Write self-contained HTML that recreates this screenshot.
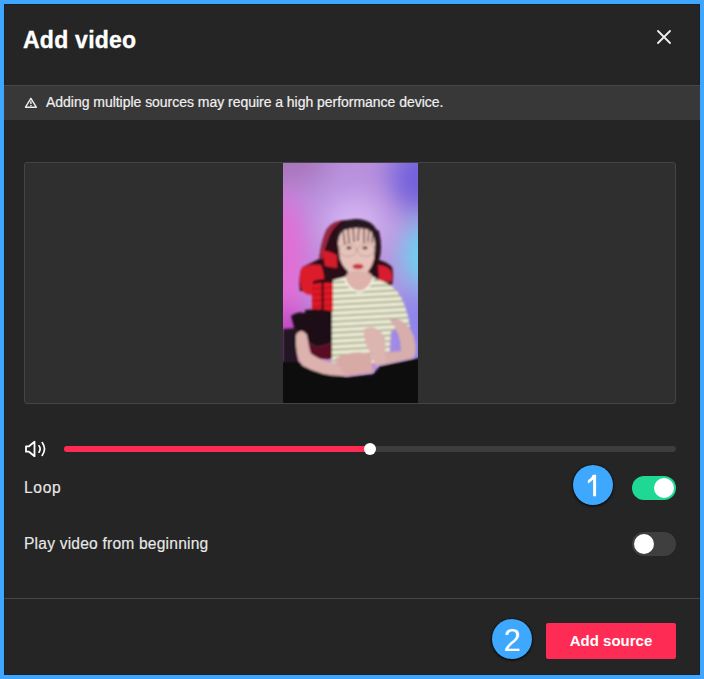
<!DOCTYPE html>
<html><head><meta charset="utf-8">
<style>
html,body{margin:0;padding:0;width:704px;height:679px;overflow:hidden;background:#3ea6ff;}
body{position:relative;font-family:"Liberation Sans",sans-serif;}
.dlg{position:absolute;left:4px;top:4px;width:696px;height:671px;background:#252525;box-shadow:inset 0 0 0 1px #15202a;}
.abs{position:absolute;}
.title{left:23px;top:28px;font-size:23px;font-weight:bold;color:#fff;line-height:25px;letter-spacing:0.25px;white-space:nowrap;-webkit-text-stroke:0.35px #fff;}
.warn{left:4px;top:85px;width:696px;height:35px;background:#383838;border-top:1px solid #474747;box-sizing:border-box;}
.wtext{left:46px;top:95px;font-size:14px;color:#f0f0f0;line-height:15px;letter-spacing:-0.03px;white-space:nowrap;-webkit-text-stroke:0.2px #f0f0f0;}
.vbox{left:24px;top:162px;width:652px;height:242px;background:#2f2f2f;border:1px solid #444;box-sizing:border-box;border-radius:3px;}
.video{left:283px;top:163px;width:135px;height:240px;overflow:hidden;}
.track{left:64px;top:446px;width:612px;height:6px;background:#3d3d3d;border-radius:3px;}
.fill{left:64px;top:446px;width:306px;height:6px;background:#fe2c55;border-radius:3px;}
.knob{left:364px;top:443px;width:12px;height:12px;background:#fff;border-radius:50%;}
.lbl{left:24px;font-size:15.6px;color:#e8e8e8;line-height:17px;letter-spacing:0.2px;white-space:nowrap;-webkit-text-stroke:0.15px #e8e8e8;}
.tog{left:632px;width:44px;height:24px;border-radius:12px;}
.tk{position:absolute;top:2px;width:20px;height:20px;border-radius:50%;background:#fff;}
.divider{left:4px;top:598px;width:696px;height:1px;background:#474747;}
.btn{left:546px;top:623px;width:130px;height:36px;background:#fe2c55;border-radius:2px;color:#fff;font-weight:bold;font-size:15px;line-height:36px;text-align:center;}
.badge{width:40px;height:40px;border-radius:50%;background:#3ea8ff;color:#fff;font-size:30px;line-height:40px;text-align:center;box-shadow:0 1px 3px rgba(0,0,0,0.85),0 0 1.5px rgba(0,0,0,0.9);}
</style></head><body>
<div class="dlg"></div>
<div class="abs title">Add video</div>
<svg class="abs" style="left:657px;top:30px" width="14" height="14" viewBox="0 0 14 14"><path d="M1 1L13 13M13 1L1 13" stroke="#eee" stroke-width="1.8" stroke-linecap="round"/></svg>
<div class="abs warn"></div>
<svg class="abs" style="left:24px;top:96px" width="14" height="13" viewBox="0 0 14 13"><path d="M6.9 2.3L1.5 11.2H12.3Z" fill="none" stroke="#eee" stroke-width="1.4" stroke-linejoin="round"/><path d="M6.9 5.2V8.1" stroke="#f2f2f2" stroke-width="1.4"/><rect x="6.2" y="8.9" width="1.4" height="1.3" fill="#f2f2f2"/></svg>
<div class="abs wtext">Adding multiple sources may require a high performance device.</div>
<div class="abs vbox"></div>
<div class="abs video" id="video"><svg width="135" height="240" viewBox="0 0 135 240" style="display:block">
<defs>
<filter id="bb" x="-50%" y="-50%" width="200%" height="200%"><feGaussianBlur stdDeviation="14"/></filter>
<filter id="bl" x="-10%" y="-10%" width="120%" height="120%"><feGaussianBlur stdDeviation="0.9"/></filter>
<pattern id="stripes" width="8" height="5.6" patternUnits="userSpaceOnUse" patternTransform="rotate(-3)"><rect width="8" height="5.6" fill="#ececd6"/><rect y="3.6" width="8" height="1.3" fill="#8c8c70"/></pattern>
</defs>
<rect width="135" height="240" fill="#b890dc"/>
<g filter="url(#bb)">
<ellipse cx="5" cy="-5" rx="40" ry="28" fill="#a874bc"/>
<ellipse cx="-5" cy="100" rx="30" ry="70" fill="#e46cd6"/>
<ellipse cx="5" cy="185" rx="30" ry="40" fill="#c040c4"/>
<ellipse cx="72" cy="62" rx="32" ry="30" fill="#d4b4f2"/>
<ellipse cx="135" cy="15" rx="28" ry="35" fill="#7060dc"/>
<ellipse cx="142" cy="92" rx="22" ry="32" fill="#60dcf4"/>
<ellipse cx="135" cy="165" rx="28" ry="40" fill="#8c84ec"/>
</g>
<g filter="url(#bl)">
<!-- chair back -->
<path d="M17 128 Q15 110 20 104 Q28 100 36 96 Q38 80 42 70 Q46 60 56 58 L74 56 L96 68 Q100 86 96 97 Q104 99 109 104 Q111 112 109 122 L60 130Z" fill="#2a0a18"/>
<path d="M36 96 Q38 80 42 70 Q46 61 55 58 L58 59 Q50 64 46 74 Q42 84 40 96Z" fill="#c03050" opacity="0.75"/>
<path d="M18 106 Q26 100 38 102 Q42 112 41 122 Q40 130 30 132 Q20 132 18 124 Q16 114 18 106Z" fill="#dc1a2c"/>
<path d="M39 87 Q47 88 54 92 L54 105 Q46 104 42 103Z" fill="#d41a2c"/>
<path d="M95 102 Q104 102 108 108 Q110 114 108 119 L96 118Z" fill="#d81a30"/>
<!-- hair -->
<path d="M52 80 Q52 58 74 56 Q94 57 96 76 L96 90 L88 96 L58 96Z" fill="#281820"/>
<!-- neck -->
<path d="M65 106 L85 106 L87 122 L63 122Z" fill="#cfa49c"/>
<!-- face -->
<path d="M55 80 Q56 64 74 62 Q90 63 92 80 L91 96 Q88 108 80 112 Q75 114 70 112 Q60 106 57 96Z" fill="#e6c2ba"/>
<path d="M54 70 Q58 58 74 57 Q91 58 95 72 L90 68 Q74 62 58 68Z" fill="#281820"/>
<path d="M60 67 L62 82 M65 65 L66 80 M70 63 L71 79 M76 62 L75 78 M81 63 L81 80 M86 65 L85 79 M90 68 L89 80" stroke="#4a3038" stroke-width="1.4" opacity="0.85"/>
<ellipse cx="65" cy="87" rx="8.5" ry="6.5" fill="none" stroke="#b89890" stroke-width="0.8"/>
<ellipse cx="83" cy="87" rx="8.5" ry="6.5" fill="none" stroke="#b89890" stroke-width="0.8"/>
<ellipse cx="66" cy="85" rx="2.6" ry="1.4" fill="#4a3030"/>
<ellipse cx="82" cy="85" rx="2.6" ry="1.4" fill="#4a3030"/>
<ellipse cx="75" cy="103.5" rx="5.5" ry="2.8" fill="#c83a42"/>
<!-- shirt -->
<path d="M48 118 Q58 114 67 114 Q76 124 88 114 Q104 118 114 128 Q124 142 127 164 L108 168 L106 200 L48 200 L46 170 L22 178 Q26 146 48 118Z" fill="url(#stripes)"/>
<path d="M62 114 Q64 108 76 108 Q88 108 90 114 Q86 127 76 128 Q66 127 62 114Z" fill="#dcb2aa"/><path d="M61 114 Q66 128 76 129 Q86 128 91 114" fill="none" stroke="#f2f2e0" stroke-width="1.8"/>
<!-- red chair arm -->
<path d="M29 120 Q38 117 50 118 L50 149 L29 150Z" fill="#e41828"/>
<rect x="38.5" y="118" width="2.2" height="31" fill="#3a0c14"/>
<path d="M29 126 L50 124 M29 132 L50 130 M29 138 L50 136 M29 144 L50 142" stroke="#8a0c18" stroke-width="1"/>
<path d="M30 118 Q40 115 50 116 L50 120 Q40 119 30 121Z" fill="#2a1018"/>
<path d="M8 153 Q14 148 22 150 L22 147 Q36 145 49 148 L49 180 L34 184 L24 178 L12 168Z" fill="#1c1018"/>
<path d="M0 166 L14 165 L15 199 L0 199Z" fill="#241420"/>
<path d="M24 178 L34 184 L49 180 L49 196 L30 196Z" fill="#5a1020"/>
<!-- desk -->
<path d="M-6 199 L20 199 L63 214 L90 211 L97 203 L141 194 L141 246 L-6 246Z" fill="#0f090f"/>
<!-- arms -->
<path d="M13 172 Q18 164 24 172 L27 190 Q40 200 66 203 L64 213 Q40 214 20 203 Q12 196 13 172Z" fill="#dcb2ae"/>
<path d="M106 156 Q124 154 131 174 Q135 190 130 195 L98 202 Q91 198 93 191 L118 188 Q118 170 106 156Z" fill="#d8aeac"/>
<path d="M81 166 Q94 160 102 175 L103 199 L93 203 L87 189 Q80 178 81 166Z" fill="#dcb4b0"/>
<path d="M52 196 Q68 186 88 191 L90 209 L62 213Z" fill="#d8aaa6"/>
</g>
</svg></div>
<svg class="abs" style="left:24px;top:440px" width="24" height="18" viewBox="0 0 24 18"><path d="M2 6.3H5L10.5 1.8V16.2L5 11.7H2Z" fill="none" stroke="#fff" stroke-width="1.8" stroke-linejoin="round"/><path d="M15 5.8Q17.3 9 15 12.2" fill="none" stroke="#fff" stroke-width="1.7" stroke-linecap="round"/><path d="M18.2 2.6Q22.8 9 18.2 15.4" fill="none" stroke="#fff" stroke-width="1.7" stroke-linecap="round"/></svg>
<div class="abs track"></div>
<div class="abs fill"></div>
<div class="abs knob"></div>
<div class="abs lbl" style="top:479px;letter-spacing:0.65px">Loop</div>
<div class="abs tog" style="top:476px;background:#1fd894"><div class="tk" style="left:22px"></div></div>
<div class="abs lbl" style="top:535px">Play video from beginning</div>
<div class="abs tog" style="top:532px;background:#3f3f3f"><div class="tk" style="left:2px"></div></div>
<div class="abs divider"></div>
<div class="abs btn">Add source</div>
<div class="abs badge" style="left:573px;top:465px"><svg width="40" height="40" viewBox="0 0 40 40" style="position:absolute;left:0;top:0"><path d="M19.9 9.7L23.1 9.7L23.1 31.2L20.1 31.2L20.1 14.6Q18 17 14.9 18.4L14.9 15.3Q18.6 13.2 19.9 9.7Z" fill="#fff"/></svg></div>
<div class="abs badge" style="left:492px;top:619px;font-size:31px;line-height:43px">2</div>
</body></html>
